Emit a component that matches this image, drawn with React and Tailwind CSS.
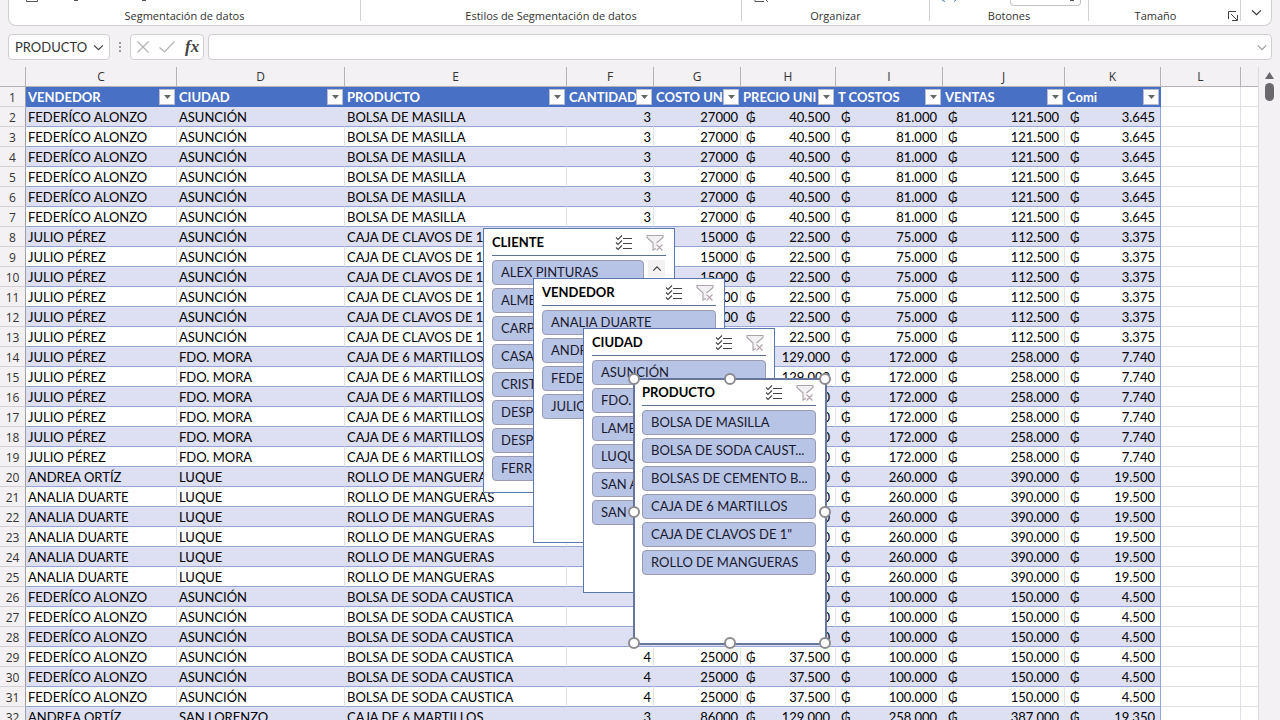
const COLUMNS = [
  { letter: 'C', title: 'VENDEDOR', kind: 'text' },
  { letter: 'D', title: 'CIUDAD', kind: 'text' },
  { letter: 'E', title: 'PRODUCTO', kind: 'text' },
  { letter: 'F', title: 'CANTIDAD', kind: 'number' },
  { letter: 'G', title: 'COSTO UNI', kind: 'number' },
  { letter: 'H', title: 'PRECIO UNI', kind: 'money' },
  { letter: 'I', title: 'T COSTOS', kind: 'money' },
  { letter: 'J', title: 'VENTAS', kind: 'money' },
  { letter: 'K', title: 'Comi', kind: 'money' },
];

const masilla = ['FEDERÍCO ALONZO', 'ASUNCIÓN', 'BOLSA DE MASILLA', '3', '27000', '40.500', '81.000', '121.500', '3.645'];
const clavos = ['JULIO PÉREZ', 'ASUNCIÓN', 'CAJA DE CLAVOS DE 1"', '5', '15000', '22.500', '75.000', '112.500', '3.375'];
const martillos = ['JULIO PÉREZ', 'FDO. MORA', 'CAJA DE 6 MARTILLOS', '2', '86000', '129.000', '172.000', '258.000', '7.740'];
const mangueras = ['ANALIA DUARTE', 'LUQUE', 'ROLLO DE MANGUERAS', '4', '65000', '97.500', '260.000', '390.000', '19.500'];
const soda = ['FEDERÍCO ALONZO', 'ASUNCIÓN', 'BOLSA DE SODA CAUSTICA', '4', '25000', '37.500', '100.000', '150.000', '4.500'];

const repeat = (row, times) => Array.from({ length: times }, () => row);

const ROWS = [
  ...repeat(masilla, 6),
  ...repeat(clavos, 6),
  ...repeat(martillos, 6),
  ['ANDREA ORTÍZ', ...mangueras.slice(1)],
  ...repeat(mangueras, 5),
  ...repeat(soda, 6),
  ['ANDREA ORTÍZ', 'SAN LORENZO', 'CAJA DE 6 MARTILLOS', '3', '86000', '129.000', '258.000', '387.000', '19.350'],
];

const SLICERS = [
  {
    title: 'CLIENTE',
    place: 'left-[483px] top-[228px]',
    scroll: true,
    items: ['ALEX PINTURAS', 'ALMENDRA', 'CARPINTERÍA', 'CASA', 'CRISTAL', 'DESPENSA 1', 'DESPENSA 2', 'FERRETERÍA'],
  },
  {
    title: 'VENDEDOR',
    place: 'left-[533px] top-[278px]',
    items: ['ANALIA DUARTE', 'ANDREA ORTÍZ', 'FEDERÍCO ALONZO', 'JULIO PÉREZ'],
  },
  {
    title: 'CIUDAD',
    place: 'left-[583px] top-[328px]',
    items: ['ASUNCIÓN', 'FDO. MORA', 'LAMBARÉ', 'LUQUE', 'SAN ANTONIO', 'SAN LORENZO'],
  },
  {
    title: 'PRODUCTO',
    place: 'left-[633px] top-[378px]',
    selected: true,
    items: ['BOLSA DE MASILLA', 'BOLSA DE SODA CAUST...', 'BOLSAS DE CEMENTO B...', 'CAJA DE 6 MARTILLOS', 'CAJA DE CLAVOS DE 1"', 'ROLLO DE MANGUERAS'],
  },
];

const HANDLES = [
  '-left-px -top-px',
  'left-1/2 -top-px',
  'left-full -top-px',
  '-left-px top-1/2',
  'left-full top-1/2',
  '-left-px top-full',
  'left-1/2 top-full',
  'left-full top-full',
];

function Chevron({ className, up }) {
  return (
    <svg className={className} viewBox="0 0 12 8" fill="none" stroke="currentColor" strokeWidth="1.4">
      <path d={up ? 'M1.5 6.5 6 2l4.5 4.5' : 'M1 1.5 6 6.5l5-5'} />
    </svg>
  );
}

function MultiSelectIcon() {
  return (
    <svg className="h-4 w-[18px]" viewBox="0 0 18 16" fill="none" stroke="#444" strokeWidth="1.1">
      <path d="M1 2.5l2 2 4-4M1 7.5l2 2 4-4M1 12.5l2 2 4-4" />
      <path d="M8 3.5h9M8 8.5h9M8 13.5h9" />
    </svg>
  );
}

function ClearFilterIcon() {
  return (
    <svg className="h-[18px] w-[18px]" viewBox="0 0 18 18" fill="none" stroke="#a9a3ab" strokeWidth="1.1">
      <path d="M10.5 9 17 3.5v-2H1v2L7 9v7l3-1.5" fill="#f3f0f4" />
      <path d="m10.5 10.5 6 6m0-6-6 6" stroke="#b5a0ad" />
    </svg>
  );
}

function RibbonGroup({ label, className, children }) {
  return (
    <div className={`relative flex h-[21px] items-end justify-center border-r border-[#d2d0d3] ${className}`}>
      {children}
      <span className="text-[11px] leading-[11px] text-[#333]">{label}</span>
    </div>
  );
}

function Ribbon() {
  return (
    <div className="mx-2 flex h-[26px] overflow-hidden rounded-b-lg border border-t-0 border-[#d0ced1] bg-white">
      <RibbonGroup label="Segmentación de datos" className="w-[352px]">
        <svg className="absolute left-[17px] top-0 h-[3px] w-[120px]" viewBox="0 0 120 3" fill="none" stroke="#555">
          <path d="M.5 0v1.5h11V0M48 .5h4M116 .5h4" />
        </svg>
      </RibbonGroup>
      <RibbonGroup label="Estilos de Segmentación de datos" className="w-[381px]" />
      <RibbonGroup label="Organizar" className="w-[188px]">
        <svg className="absolute left-[12px] top-0 h-[3px] w-4" viewBox="0 0 16 3" fill="none" stroke="#555">
          <path d="M1 0v1.5h9M12 0l2 2" />
        </svg>
      </RibbonGroup>
      <RibbonGroup label="Botones" className="w-[159px]">
        <svg className="absolute left-[11px] top-0 h-[2px] w-4" viewBox="0 0 16 2" fill="none" stroke="#4a7ab5">
          <path d="m1 0 3 1.5M15 0l-2 1.5" />
        </svg>
        <span className="absolute right-[7px] top-0 h-[6px] w-[71px] rounded-b border border-t-0 border-[#c4c2c5]" />
        <span className="absolute right-[14px] top-0 h-px w-1 bg-[#555]" />
      </RibbonGroup>
      <RibbonGroup label="Tamaño" className="w-[152px] pr-[18px]">
        <button type="button" aria-label="Tamaño y propiedades" className="absolute right-[2px] top-[11px]">
          <svg className="h-[10px] w-[10px]" viewBox="0 0 10 10" fill="none" stroke="#444">
            <path d="M.5 8V.5H8M3 3l6 6M9.5 4v5.5H4" />
          </svg>
        </button>
      </RibbonGroup>
      <button type="button" aria-label="Contraer la cinta" className="flex flex-1 items-center justify-center text-[#333]">
        <Chevron className="h-[7px] w-[11px]" />
      </button>
    </div>
  );
}

function FormulaBar() {
  return (
    <div className="flex h-[26px] px-2">
      <div className="flex w-[102px] items-center rounded border border-[#d0ced1] bg-white">
        <input aria-label="Cuadro de nombres" defaultValue="PRODUCTO" className="w-[80px] min-w-0 bg-transparent pl-[6px] pt-[2px] font-[Lato,sans-serif] text-[13px] text-[#333] outline-none" />
        <button type="button" aria-label="Abrir cuadro de nombres" className="pl-1 text-[#444]">
          <Chevron className="h-[7px] w-[11px]" />
        </button>
      </div>
      <div className="flex w-5 flex-col items-center justify-center gap-[2px]">
        <i className="h-[2px] w-[2px] bg-[#999]" />
        <i className="h-[2px] w-[2px] bg-[#999]" />
        <i className="h-[2px] w-[2px] bg-[#999]" />
      </div>
      <div className="flex w-[74px] items-center gap-[10px] rounded border border-[#d0ced1] bg-white pl-[6px]">
        <button type="button" aria-label="Cancelar">
          <svg className="h-3 w-3" viewBox="0 0 12 12" fill="none" stroke="#b3b1b4" strokeWidth="1.2"><path d="m.5.5 11 11m0-11-11 11" /></svg>
        </button>
        <button type="button" aria-label="Introducir">
          <svg className="h-3 w-4" viewBox="0 0 16 12" fill="none" stroke="#b3b1b4" strokeWidth="1.2"><path d="m.5 6.5 5 4.5L15.5.5" /></svg>
        </button>
        <button type="button" aria-label="Insertar función" className="font-['Liberation_Serif',serif] text-[17px] leading-4 font-bold italic text-[#444]">fx</button>
      </div>
      <div className="ml-1 flex flex-1 items-center rounded border border-[#d0ced1] bg-white">
        <input aria-label="Barra de fórmulas" className="min-w-0 flex-1 bg-transparent px-2 outline-none" />
        <button type="button" aria-label="Expandir barra de fórmulas" className="pr-1 text-[#999]">
          <Chevron className="h-[7px] w-[10px]" />
        </button>
      </div>
    </div>
  );
}

function HeaderCell({ title }) {
  return (
    <th scope="col" className="bg-[#4870c4] p-0 text-left font-bold text-white">
      <div className="flex h-5 items-center justify-between overflow-hidden pl-[2px]">
        <span className="min-w-0 flex-1 overflow-hidden whitespace-nowrap pt-px">{title}</span>
        <button type="button" aria-label={`Filtrar ${title}`} className="mr-[2px] flex h-4 w-4 shrink-0 items-center justify-center border border-[#b8bdd0] bg-white">
          <svg className="h-1 w-[7px]" viewBox="0 0 7 4" fill="#666"><path d="M0 0h7L3.5 4z" /></svg>
        </button>
      </div>
    </th>
  );
}

function RowNumber({ n }) {
  return (
    <th scope="row" className="border-b border-r border-b-[#d3d1d6] border-r-[#a19fa6] bg-[#f3f1f4] px-0 pt-[2px] pb-0 text-center font-['Open_Sans',sans-serif] text-[12px] font-normal text-[#333]">
      {n}
    </th>
  );
}

function BodyCell({ kind, value, last, banded }) {
  const fill = banded ? 'bg-[#dddff3]' : 'bg-white';
  const edge = last ? 'border-r-[#8ea9db]' : banded ? 'border-r-[#dddff3]' : 'border-r-[#e4e2e8]';
  const base = `overflow-hidden whitespace-nowrap border-r border-b border-b-[#93a5d3] pt-[2px] pb-0 ${fill} ${edge}`;
  if (kind === 'money') {
    return (
      <td className={`${base} px-[5px]`}>
        <div className="flex justify-between">
          <span>₲</span>
          <span>{value}</span>
        </div>
      </td>
    );
  }
  return <td className={`${base} px-[2px] ${kind === 'number' ? 'text-right' : ''}`}>{value}</td>;
}

function Sheet() {
  return (
    <table className="w-full table-fixed border-separate border-spacing-0 bg-white font-[Lato,'Noto_Sans',sans-serif] text-[13px] leading-[17px] text-black">
      <colgroup>
        <col className="w-[26px]" />
        <col className="w-[151px]" />
        <col className="w-[168px]" />
        <col className="w-[222px]" />
        <col className="w-[87px]" />
        <col className="w-[87px]" />
        <col className="w-[95px]" />
        <col className="w-[107px]" />
        <col className="w-[122px]" />
        <col className="w-[96px]" />
        <col className="w-[80px]" />
        <col />
      </colgroup>
      <thead>
        <tr className="h-5 bg-[#f3f1f4] font-['Open_Sans',sans-serif] text-[12px] text-[#333]">
          <th className="border-b border-r border-[#b5b3b8] p-0" />
          {COLUMNS.map((c) => (
            <th key={c.letter} scope="col" className="border-b border-r border-[#b5b3b8] p-0 font-normal">{c.letter}</th>
          ))}
          <th scope="col" className="border-b border-r border-[#b5b3b8] p-0 font-normal">L</th>
          <th className="border-b border-[#b5b3b8] p-0" />
        </tr>
        <tr className="h-5">
          <RowNumber n={1} />
          {COLUMNS.map((c) => <HeaderCell key={c.letter} title={c.title} />)}
          <td className="border-b border-r border-[#e1dfe5] p-0" />
          <td className="border-b border-[#e1dfe5] p-0" />
        </tr>
      </thead>
      <tbody>
        {ROWS.map((row, r) => (
          <tr key={r} className="h-5">
            <RowNumber n={r + 2} />
            {row.map((value, i) => (
              <BodyCell key={i} kind={COLUMNS[i].kind} value={value} last={i === row.length - 1} banded={r % 2 === 0} />
            ))}
            <td className="border-b border-r border-[#e1dfe5] p-0" />
            <td className="border-b border-[#e1dfe5] p-0" />
          </tr>
        ))}
      </tbody>
    </table>
  );
}

function Slicer({ title, place, items, scroll, selected }) {
  const frame = selected
    ? 'h-[267px] w-[194px] border-2 border-[#66759c] pl-[7px] pr-[9px]'
    : 'h-[265px] w-[192px] border border-[#5b78ac] px-2';
  return (
    <section className={`absolute bg-white font-[Lato,sans-serif] text-[13px] ${frame} ${place}`}>
      <header className={`flex items-center border-b border-[#5b7290] ${selected ? 'h-[26px]' : 'h-[27px] pt-px'}`}>
        <h2 className="flex-1 font-bold text-black">{title}</h2>
        <button type="button" aria-label="Selección múltiple" className="mr-[13px]"><MultiSelectIcon /></button>
        <button type="button" aria-label="Borrar filtro" className="mr-[2px]"><ClearFilterIcon /></button>
      </header>
      <div className="flex justify-between pt-1">
        <ul className={`flex flex-col gap-[3px] ${scroll ? 'w-[152px]' : 'w-full'}`}>
          {items.map((item) => (
            <li key={item}>
              <button type="button" className="block h-[25px] w-full truncate rounded border border-[#9a9bb0] bg-[#b8c4e6] pl-2 text-left text-[#1a1a2e]">
                {item}
              </button>
            </li>
          ))}
        </ul>
        {scroll && (
          <button type="button" aria-label="Subir" className="mr-px flex h-[17px] w-[17px] items-center justify-center bg-[#f3f1f2] text-[#444]">
            <Chevron up className="h-[7px] w-[10px]" />
          </button>
        )}
      </div>
      {selected && HANDLES.map((pos) => (
        <span key={pos} className={`absolute h-3 w-3 -translate-x-1/2 -translate-y-1/2 rounded-full border-2 border-[#8d8b90] bg-white ${pos}`} />
      ))}
    </section>
  );
}

export default function App() {
  return (
    <div className="relative h-screen overflow-hidden bg-[#f3f1f4] font-['Open_Sans','Noto_Sans',sans-serif]">
      <Ribbon />
      <div className="pt-2 pb-[7px]">
        <FormulaBar />
      </div>
      <div className="flex">
        <div className="min-w-0 flex-1">
          <Sheet />
        </div>
        <div className="flex w-[22px] flex-col items-center border-l border-[#dcdadf] pt-[5px]">
          <svg className="h-[7px] w-[9px]" viewBox="0 0 9 7" fill="#6b696e"><path d="M4.5 0 9 7H0z" /></svg>
          <span className="mt-1 h-[18px] w-[9px] rounded-full bg-[#6b696e]" />
        </div>
      </div>
      {SLICERS.map((s) => <Slicer key={s.title} {...s} />)}
    </div>
  );
}
